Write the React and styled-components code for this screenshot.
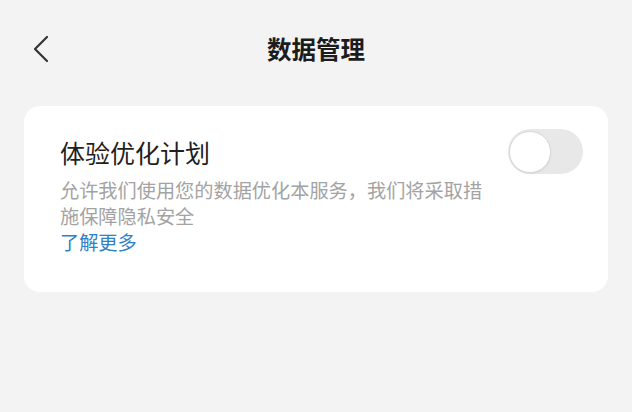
import React, { useState } from 'react';
import styled, { createGlobalStyle } from 'styled-components';

const GlobalStyle = createGlobalStyle`
  html, body {
    margin: 0;
    padding: 0;
    background: #f3f3f3;
    font-family: "Noto Sans CJK SC", "Noto Sans", sans-serif;
  }
`;

function BackIcon() {
  return (
    <svg width="24" height="30" viewBox="0 0 24 30" fill="none">
      <polyline
        points="19,3 7,15 19,27"
        stroke="#333"
        strokeWidth="2.2"
        strokeLinecap="round"
        strokeLinejoin="round"
      />
    </svg>
  );
}

export default function App() {
  const [on, setOn] = useState(false);

  return (
    <Page>
      <GlobalStyle />
      <Header>
        <BackBtn aria-label="返回">
          <BackIcon />
        </BackBtn>
        <Title>数据管理</Title>
      </Header>
      <Card>
        <TextCol>
          <ItemTitle>体验优化计划</ItemTitle>
          <Desc>允许我们使用您的数据优化本服务，我们将采取措施保障隐私安全</Desc>
          <Link href="#">了解更多</Link>
        </TextCol>
        <Switch $on={on} onClick={() => setOn(!on)} aria-label="体验优化计划">
          <Knob $on={on} />
        </Switch>
      </Card>
    </Page>
  );
}

const Page = styled.div`
  width: 632px;
  height: 412px;
  background: #f3f3f3;
  padding: 0 24px;
  box-sizing: border-box;
`;

const Header = styled.div`
  position: relative;
  height: 98px;
  display: flex;
  align-items: center;
  justify-content: center;
`;

const BackBtn = styled.button`
  position: absolute;
  left: 4px;
  top: 34px;
  padding: 0;
  border: none;
  background: none;
  display: flex;
  cursor: pointer;
`;

const Title = styled.h1`
  margin: 0;
  font-size: 24.5px;
  line-height: 32px;
  font-weight: 700;
  color: #1c1c1c;
`;

const Card = styled.div`
  margin-top: 8px;
  background: #fff;
  border-radius: 16px;
  padding: 30px 25px 37px 36px;
  display: flex;
  justify-content: space-between;
  align-items: flex-start;
`;

const TextCol = styled.div`
  display: flex;
  flex-direction: column;
  width: 430px;
`;

const ItemTitle = styled.div`
  font-size: 25px;
  line-height: 32px;
  color: #1f1f1f;
`;

const Desc = styled.div`
  margin-top: 9px;
  font-size: 19.2px;
  line-height: 26px;
  color: #a3a3a3;
`;

const Link = styled.a`
  font-size: 19.2px;
  line-height: 26px;
  color: #2f80c6;
  text-decoration: none;
  align-self: flex-start;
`;

const Switch = styled.button`
  position: relative;
  width: 75px;
  height: 45px;
  margin-top: -7px;
  border: none;
  border-radius: 23px;
  padding: 0;
  background: ${p => (p.$on ? '#3482ff' : '#e8e8e8')};
  cursor: pointer;
  flex-shrink: 0;
`;

const Knob = styled.span`
  position: absolute;
  top: 2px;
  left: ${p => (p.$on ? '32px' : '1px')};
  width: 40px;
  height: 40px;
  border-radius: 50%;
  background: #fff;
  border: 1px solid #d9d9d9;
  box-shadow: 0 1px 2px rgba(0, 0, 0, 0.08);
`;
